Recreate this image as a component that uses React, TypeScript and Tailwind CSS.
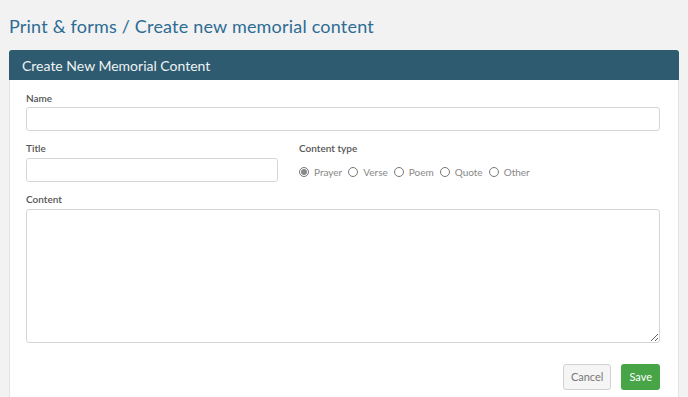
export default function App() {
  return (
    <div className="min-h-[397px] bg-[#f2f2f2] pl-[9px] pr-[9px] pt-[14px] font-['Lato',sans-serif]">
      <h1 className="text-[18px] leading-[24px] text-[#2d6c94] tracking-[0.2px]">
        Print &amp; forms / Create new memorial content
      </h1>
      <div className="mt-[12px] w-[670px] bg-white rounded-t-[3px] border border-[#e3e3e3]">
        <div className="h-[30px] bg-[#2e5b6f] rounded-t-[3px] flex items-center px-[13px] text-[14px] text-[#eef3f5] -mx-px -mt-px">
          Create New Memorial Content
        </div>
        <div className="pl-[16px] pr-[18px] pt-[12px] pb-[8px] text-[#444]">
          <label className="block text-[10px] leading-[12px] font-semibold text-[#555]">Name</label>
          <input className="mt-[3px] block w-full h-[24px] rounded-[3px] border border-[#d6d6d6] bg-white" />
          <div className="mt-[11px] flex">
            <div className="w-[252px]">
              <label className="block text-[10px] leading-[12px] font-semibold text-[#555]">Title</label>
              <input className="mt-[4px] block w-full h-[24px] rounded-[3px] border border-[#d6d6d6] bg-white" />
            </div>
            <div className="ml-[21px]">
              <label className="block text-[10px] leading-[12px] font-semibold text-[#555]">Content type</label>
              <div className="mt-[12px] h-[12px] flex items-center text-[10px] text-[#888]">
                {["Prayer", "Verse", "Poem", "Quote", "Other"].map((t, i) => (
                  <span key={t} className="flex items-center mr-[6px]">
                    <span className="w-[10px] h-[10px] rounded-full border border-[#777] flex items-center justify-center mr-[5px]">
                      {i === 0 && <span className="w-[6px] h-[6px] rounded-full bg-[#888]" />}
                    </span>
                    {t}
                  </span>
                ))}
              </div>
            </div>
          </div>
          <label className="mt-[11px] block text-[10px] leading-[12px] font-semibold text-[#555]">Content</label>
          <textarea className="mt-[4px] block w-full h-[134px] rounded-[3px] border border-[#d6d6d6] bg-white" />
          <div className="mt-[21px] flex justify-end gap-[10px]">
            <button className="h-[26px] px-[7px] rounded-[3px] border border-[#d2d2d2] bg-[#f5f5f5] text-[11px] text-[#777]">Cancel</button>
            <button className="h-[26px] px-[8px] rounded-[3px] bg-[#47a447] text-[11px] text-white">Save</button>
          </div>
        </div>
      </div>
    </div>
  );
}
